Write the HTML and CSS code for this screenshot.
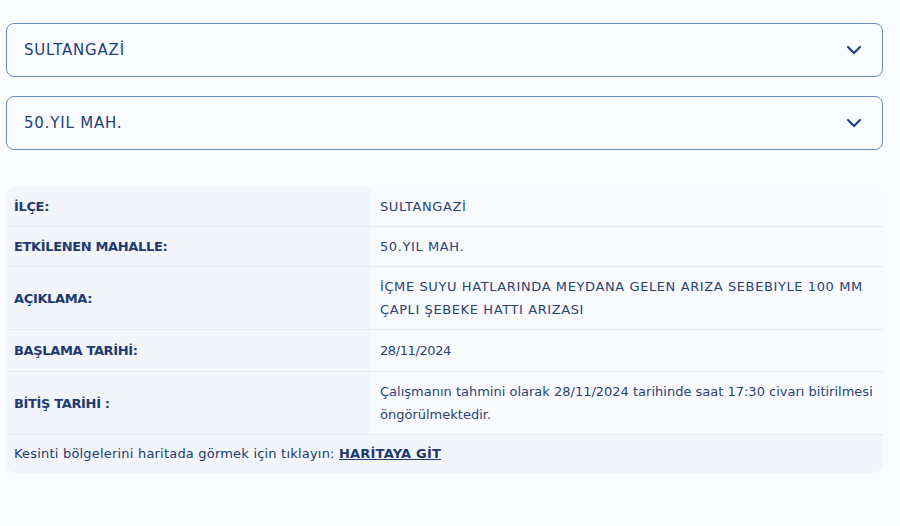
FILE: index.html
```html
<!DOCTYPE html>
<html lang="tr">
<head>
    <meta charset="UTF-8">
    <meta name="viewport" content="width=device-width, initial-scale=1.0">
    <title>Arıza Kesinti Sorgulama</title>
    <link rel="stylesheet" href="styles.css">
</head>
<body>
    <div class="container">
        <div class="select-box">
            <span class="select-text">SULTANGAZİ</span>
            <svg class="chevron" width="16" height="10" viewBox="0 0 16 10">
                <path d="M2 2 L8 8 L14 2" fill="none" stroke="#1d4385" stroke-width="2.2" stroke-linecap="round" stroke-linejoin="round"/>
            </svg>
        </div>

        <div class="select-box">
            <span class="select-text">50.YIL MAH.</span>
            <svg class="chevron" width="16" height="10" viewBox="0 0 16 10">
                <path d="M2 2 L8 8 L14 2" fill="none" stroke="#1d4385" stroke-width="2.2" stroke-linecap="round" stroke-linejoin="round"/>
            </svg>
        </div>

        <table class="info-table">
            <tr>
                <th>İLÇE:</th>
                <td class="caps">SULTANGAZİ</td>
            </tr>
            <tr>
                <th>ETKİLENEN MAHALLE:</th>
                <td class="caps">50.YIL MAH.</td>
            </tr>
            <tr>
                <th>AÇIKLAMA:</th>
                <td class="caps">İÇME SUYU HATLARINDA MEYDANA GELEN ARIZA SEBEBIYLE 100 MM ÇAPLI ŞEBEKE HATTI ARIZASI</td>
            </tr>
            <tr class="date-row">
                <th>BAŞLAMA TARİHİ:</th>
                <td class="date">28/11/2024</td>
            </tr>
            <tr>
                <th>BİTİŞ TARİHİ :</th>
                <td>Çalışmanın tahmini olarak 28/11/2024 tarihinde saat 17:30 civarı bitirilmesi öngörülmektedir.</td>
            </tr>
            <tr class="map-row">
                <td colspan="2">Kesinti bölgelerini haritada görmek için tıklayın: <a href="#" class="map-link">HARİTAYA GİT</a></td>
            </tr>
        </table>
    </div>
</body>
</html>
```

FILE: styles.css
```css
* {
    margin: 0;
    padding: 0;
    box-sizing: border-box;
}

body {
    font-family: 'DejaVu Sans', 'Noto Sans', sans-serif;
    background: #f9fbfe;
    color: #1f3a6c;
}

.container {
    width: 877px;
    margin-left: 6px;
    padding-top: 23px;
}

.select-box {
    height: 54px;
    border: 1px solid #6a8bc2;
    border-radius: 8px;
    background: #f9fbfe;
    display: flex;
    align-items: center;
    justify-content: space-between;
    padding: 0 20px 0 17px;
    margin-bottom: 19px;
}

.select-text {
    font-size: 15px;
    color: #23407a;
    letter-spacing: 0.8px;
}

.chevron {
    display: block;
}

.info-table {
    width: 100%;
    margin-top: 37px;
    border-collapse: separate;
    border-spacing: 0;
    border-radius: 10px;
    overflow: hidden;
    font-size: 13px;
    line-height: 23px;
}

.info-table th,
.info-table td {
    text-align: left;
    vertical-align: middle;
    padding: 8px 9px;
    border-bottom: 1px solid #e7ebf1;
}

.info-table th {
    width: 365px;
    background: #f2f5fa;
    font-weight: bold;
    color: #1d3a70;
    padding-left: 8px;
    letter-spacing: -0.35px;
}

.info-table td {
    background: #f8fafd;
    color: #2a4274;
}

.info-table td.caps {
    letter-spacing: 0.6px;
}

.info-table td.date {
    letter-spacing: -0.4px;
}

.info-table .date-row th,
.info-table .date-row td {
    padding-top: 9px;
    padding-bottom: 9px;
}

.map-row td {
    background: #f2f5fa;
    border-bottom: none;
    padding: 8px 8px;
    line-height: 22px;
    color: #1d3a70;
    letter-spacing: 0.2px;
}

.map-link {
    color: #1d3a70;
    font-weight: bold;
    text-decoration: underline;
}
```
